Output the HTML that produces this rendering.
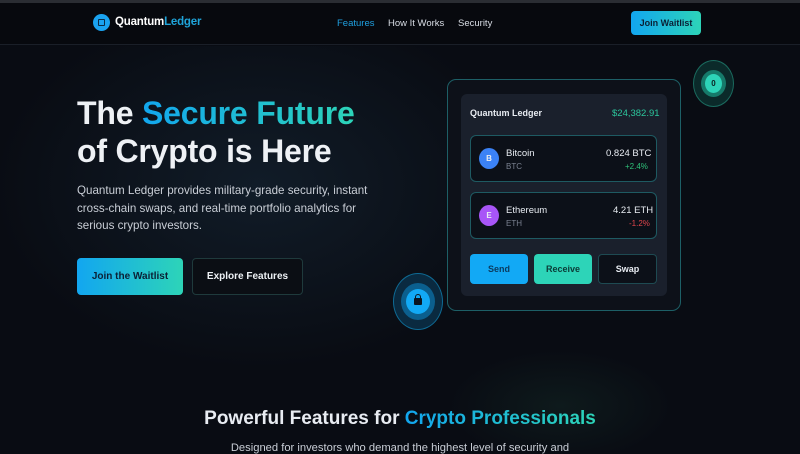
<!DOCTYPE html>
<html><head><style>
*{margin:0;padding:0;box-sizing:border-box}
body{width:800px;height:450px;overflow:hidden;background:#090c13;font-family:"Liberation Sans",sans-serif;color:#e8ecf2;position:relative}
.abs{position:absolute}
.grad{background:linear-gradient(90deg,#12a6ee,#2dd4b8);-webkit-background-clip:text;background-clip:text;color:transparent}
</style></head><body>
<div class="abs" style="left:0;top:0;width:800px;height:3px;background:#2a2d33"></div>
<div class="abs" style="left:0;top:3px;width:800px;height:42px;background:#07090e;border-bottom:1px solid #1a1f28"></div>
<div class="abs" style="left:0;top:46px;width:800px;height:404px;background:radial-gradient(ellipse 380px 260px at 260px 140px,#111c28 0%,rgba(9,12,19,0) 70%),radial-gradient(ellipse 160px 80px at 560px 360px,#0e1a1c,rgba(9,12,19,0) 70%)"></div>
<div class="abs" style="left:93px;top:14px;width:17px;height:17px;border-radius:50%;background:#1aa3f0"></div>
<div class="abs" style="left:98px;top:19px;width:7px;height:7px;border:1.5px solid #0a2a45;border-radius:1px"></div>
<div class="abs" style="left:115px;top:16px;font-size:11.5px;font-weight:bold;color:#fff;letter-spacing:-0.2px">Quantum<span style="color:#1fa4d9">Ledger</span></div>
<div class="abs" style="left:337px;top:18px;font-size:9.5px;color:#1fa0e0">Features</div>
<div class="abs" style="left:388px;top:18px;font-size:9.5px;color:#d8dde5">How It Works</div>
<div class="abs" style="left:458px;top:18px;font-size:9.5px;color:#d8dde5">Security</div>
<div class="abs" style="left:631px;top:11px;width:70px;height:24px;border-radius:4px;background:linear-gradient(90deg,#12a6f0,#2dd4b8);font-size:9px;font-weight:bold;color:#0b2035;text-align:center;line-height:24px">Join Waitlist</div>

<div class="abs" style="left:77px;top:94px;font-size:32px;font-weight:bold;line-height:38px;letter-spacing:-0.2px;color:#eef1f5;white-space:nowrap">The <span class="grad">Secure Future</span><br>of Crypto is Here</div>
<div class="abs" style="left:77px;top:182px;font-size:11.6px;line-height:17.5px;color:#c9ced6;white-space:nowrap">Quantum Ledger provides military-grade security, instant<br>cross-chain swaps, and real-time portfolio analytics for<br>serious crypto investors.</div>
<div class="abs" style="left:77px;top:258px;width:106px;height:37px;border-radius:4px;background:linear-gradient(90deg,#12a6f0,#2dd4b8);font-size:10px;font-weight:bold;color:#0b2035;text-align:center;line-height:37px">Join the Waitlist</div>
<div class="abs" style="left:192px;top:258px;width:111px;height:37px;border-radius:4px;border:1px solid #1f3a3c;background:#0b0e14;font-size:10px;font-weight:bold;color:#eef1f5;text-align:center;line-height:35px">Explore Features</div>

<div class="abs" style="left:447px;top:79px;width:234px;height:232px;border-radius:9px;border:1px solid #1d5f66;background:#0d1119"></div>
<div class="abs" style="left:461px;top:94px;width:206px;height:202px;border-radius:6px;background:#1a202c"></div>
<div class="abs" style="left:470px;top:108px;font-size:9px;font-weight:bold">Quantum Ledger</div>
<div class="abs" style="left:612px;top:108px;font-size:9.5px;color:#2cc59c">$24,382.91</div>
<div class="abs" style="left:470px;top:135px;width:187px;height:47px;border-radius:6px;border:1px solid #1e5a62;background:#0c1018"></div>
<div class="abs" style="left:479px;top:148px;width:20px;height:21px;border-radius:50%;background:#3b82f6;font-size:8px;font-weight:bold;text-align:center;line-height:21px">B</div>
<div class="abs" style="left:506px;top:148px;font-size:9.5px">Bitcoin</div>
<div class="abs" style="left:506px;top:162px;font-size:8px;color:#7a8190">BTC</div>
<div class="abs" style="left:606px;top:148px;font-size:9.5px">0.824 BTC</div>
<div class="abs" style="left:625px;top:162px;font-size:8px;color:#2fc27a">+2.4%</div>
<div class="abs" style="left:470px;top:192px;width:187px;height:47px;border-radius:6px;border:1px solid #1e5a62;background:#0c1018"></div>
<div class="abs" style="left:479px;top:205px;width:20px;height:21px;border-radius:50%;background:#a855f7;font-size:8px;font-weight:bold;text-align:center;line-height:21px">E</div>
<div class="abs" style="left:506px;top:205px;font-size:9.5px">Ethereum</div>
<div class="abs" style="left:506px;top:219px;font-size:8px;color:#7a8190">ETH</div>
<div class="abs" style="left:613px;top:205px;font-size:9.5px">4.21 ETH</div>
<div class="abs" style="left:629px;top:219px;font-size:8px;color:#e0454c">-1.2%</div>
<div class="abs" style="left:470px;top:254px;width:58px;height:30px;border-radius:4px;background:#12a9f5;font-size:9px;font-weight:bold;color:#0b3a5e;text-align:center;line-height:30px">Send</div>
<div class="abs" style="left:534px;top:254px;width:58px;height:30px;border-radius:4px;background:#2dd4b8;font-size:9px;font-weight:bold;color:#0b3a36;text-align:center;line-height:30px">Receive</div>
<div class="abs" style="left:598px;top:254px;width:59px;height:30px;border-radius:4px;border:1px solid #1e4a52;background:#0c1018;font-size:9px;font-weight:bold;text-align:center;line-height:28px">Swap</div>

<div class="abs" style="left:393px;top:273px;width:50px;height:57px;border-radius:50%;background:#0a2a40;border:1px solid #0e6a94"></div>
<div class="abs" style="left:401px;top:283px;width:34px;height:37px;border-radius:50%;background:#0b5f8e"></div>
<div class="abs" style="left:406px;top:289px;width:24px;height:25px;border-radius:50%;background:#12a9f5"></div>
<div class="abs" style="left:414px;top:298px;width:8px;height:7px;background:#0a1520;border-radius:1px"></div>
<div class="abs" style="left:415px;top:294px;width:6px;height:6px;border:1.5px solid #0a1520;border-bottom:none;border-radius:3px 3px 0 0"></div>
<div class="abs" style="left:693px;top:60px;width:41px;height:47px;border-radius:50%;background:#0b2a2a;border:1px solid #1a6a5e"></div>
<div class="abs" style="left:701px;top:70px;width:25px;height:27px;border-radius:50%;background:#167a6a"></div>
<div class="abs" style="left:705px;top:74px;width:17px;height:19px;border-radius:50%;background:#2dd4b8;font-size:8px;font-weight:bold;color:#0a2020;text-align:center;line-height:19px">0</div>

<div class="abs" style="left:0;top:408px;width:800px;text-align:center;font-size:19px;font-weight:bold;color:#e8ecf2">Powerful Features for <span class="grad">Crypto Professionals</span></div>
<div class="abs" style="left:0;top:442px;width:800px;text-align:center;font-size:11.2px;color:#c9ced6">Designed for investors who demand the highest level of security and</div>
</body></html>
